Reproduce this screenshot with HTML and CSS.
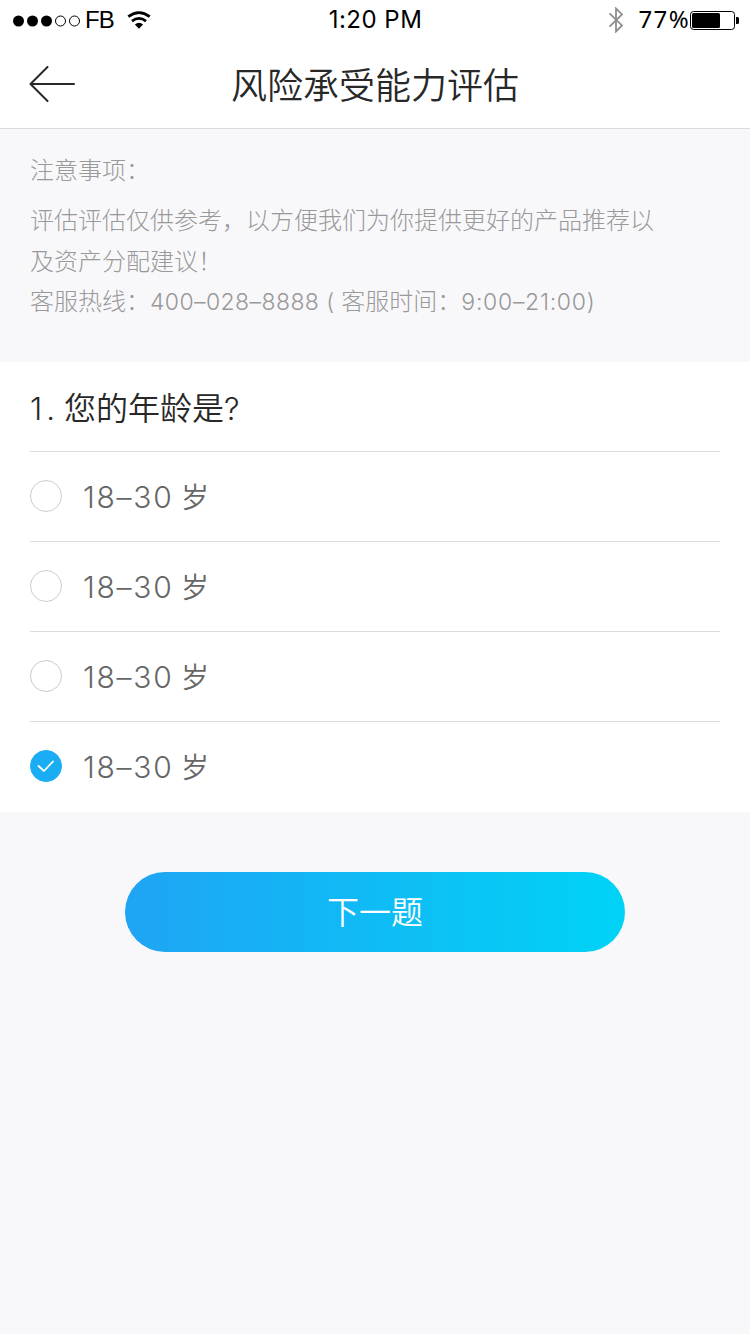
FILE: index.html
```html
<!DOCTYPE html>
<html lang="zh-CN">
<head>
    <meta charset="UTF-8">
    <meta name="viewport" content="width=device-width, initial-scale=1.0">
    <title>风险承受能力评估</title>
    <link rel="stylesheet" href="styles.css">
</head>
<body>

<!-- Status bar -->
<div class="status-bar">
    <div class="status-left">
        <svg class="signal" width="68" height="12" viewBox="0 0 68 12">
            <circle cx="5.5" cy="6" r="5.5"/>
            <circle cx="19.5" cy="6" r="5.5"/>
            <circle cx="33.5" cy="6" r="5.5"/>
            <circle class="empty" cx="47.5" cy="6" r="5"/>
            <circle class="empty" cx="61.5" cy="6" r="5"/>
        </svg>
        <span class="carrier">FB</span>
        <svg class="wifi" width="24" height="18" viewBox="0 0 24 18">
            <path class="wave" d="M1.3 5.6Q12 -2.4 22.7 5.6"/>
            <path class="wave" d="M5 10.1Q12 4.6 19 10.1"/>
            <path d="M7.9 13.4Q12 10.2 16.1 13.4L12 17.8Z"/>
        </svg>
    </div>
    <span class="time">1:20 PM</span>
    <div class="status-right">
        <svg class="bluetooth" width="16" height="26" viewBox="0 0 16 26">
            <path d="M1.5 6.3L14 18.4L8 24.5V1.5L14 7.4L1.5 19.7"/>
        </svg>
        <span class="percent">77%</span>
        <svg class="battery" width="49" height="19" viewBox="0 0 49 19">
            <rect class="case" x="0.5" y="0.5" width="44" height="18" rx="3"/>
            <rect x="2" y="2" width="28" height="15" rx="1.5"/>
            <path d="M46 6h1.5q1.5 0 1.5 1.5v4q0 1.5-1.5 1.5H46z"/>
        </svg>
    </div>
</div>

<header class="header">
    <a class="back" href="#">
        <svg width="46" height="36" viewBox="0 0 46 36">
            <path d="M18.5 1L1.5 18L18.5 35M1.5 18H45"/>
        </svg>
    </a>
    <h1>风险承受能力评估</h1>
</header>

<section class="notice">
    <h3>注意事项：</h3>
    <p>评估评估仅供参考，以方便我们为你提供更好的产品推荐以<br>及资产分配建议！</p>
    <p class="hotline">客服热线：<span class="phone">400–028–8888 (</span> 客服时间：<span class="hours">9:00–21:00)</span></p>
</section>

<form class="question">
    <h2><span class="number">1.</span>您的年龄是<span class="mark">?</span></h2>
    <label class="option">
        <input type="radio" name="age">
        <span class="radio"></span>
        <span class="range">18–30</span><span class="unit">岁</span>
    </label>
    <label class="option">
        <input type="radio" name="age">
        <span class="radio"></span>
        <span class="range">18–30</span><span class="unit">岁</span>
    </label>
    <label class="option">
        <input type="radio" name="age">
        <span class="radio"></span>
        <span class="range">18–30</span><span class="unit">岁</span>
    </label>
    <label class="option">
        <input type="radio" name="age" checked>
        <span class="radio">
            <svg width="18" height="14" viewBox="0 0 18 14"><path d="M1.5 7L7 12L16 2.5"/></svg>
        </span>
        <span class="range">18–30</span><span class="unit">岁</span>
    </label>
</form>

<button class="next" type="button">下一题</button>

</body>
</html>
```
FILE: styles.css
```css
* { box-sizing: border-box; }
body { margin: 0; background: #f8f8fb; color: #282828; font-family: Inter, "Noto Sans CJK SC", sans-serif; }
h1, h2, h3, p { margin: 0; font-weight: 300; }

/* Status bar */
.status-bar { display: grid; grid-template-columns: 1fr auto 1fr; align-items: center; height: 40px; background: #fff; color: #000; font-size: 24px; line-height: 40px; }
.status-left { display: flex; align-items: center; padding-left: 13px; }
.status-right { display: flex; align-items: center; justify-content: flex-end; padding-right: 11px; }
.signal { margin-top: 1px; }
.signal .empty { fill: none; stroke: #000; stroke-width: 1; }
.carrier { margin-left: 4px; font-family: "Liberation Sans", sans-serif; letter-spacing: -1px; }
.wifi { margin-left: 13px; }
.wifi .wave { fill: none; stroke: #000; stroke-width: 2.8; }
.time { padding-left: 1px; letter-spacing: 0.5px; }
.bluetooth { margin-right: 14px; fill: none; stroke: #8e8e8e; stroke-width: 1.8; }
.percent { padding-bottom: 2px; font-family: "Noto Sans", sans-serif; letter-spacing: 1.4px; line-height: 38px; }
.battery .case { fill: none; stroke: #000; }

/* Title */
.header { display: grid; grid-template-columns: 100px 1fr 100px; align-items: center; height: 89px; background: #fff; border-bottom: 1px solid #dcdcdc; }
.header h1 { font-family: "Noto Sans CJK SC", sans-serif; font-size: 36px; font-weight: 350; line-height: 86px; height: 88px; text-align: center; }
.back { display: flex; padding-left: 29px; }
.back path { fill: none; stroke: #282828; stroke-width: 2; stroke-linecap: round; stroke-linejoin: round; }

/* Notes */
.notice { height: 233px; padding: 21px 30px 0; color: #999; font-size: 24px; line-height: 41px; white-space: nowrap; }
.notice h3 { margin-bottom: 9px; font-size: 24px; }
.hotline { margin-top: -1px; }
.phone, .hours { font-size: 23px; letter-spacing: 0.4px; }
.hours { letter-spacing: 0.7px; }

/* Question */
.question { height: 450px; padding: 0 30px; background: #fff; }
.question h2 { height: 89px; font-size: 32px; line-height: 89px; font-family: "Noto Sans CJK SC", sans-serif; font-weight: 350; }
.number, .mark { font-family: Inter, sans-serif; font-size: 31px; font-weight: 300; }
.number { display: inline-block; width: 34px; letter-spacing: 4px; }
.option { display: flex; align-items: center; height: 90px; border-top: 1px solid #dcdcdc; color: #666; font-size: 28px; font-weight: 300; }
.option input { display: none; }
.radio { display: flex; align-items: center; justify-content: center; width: 32px; height: 32px; margin: 0 21px 2px 0; border: 1px solid #ccc; border-radius: 50%; }
.option input:checked + .radio { background: #1badf4; border-color: #1badf4; }
.radio path { fill: none; stroke: #fff; stroke-width: 1.8; stroke-linecap: round; stroke-linejoin: round; }
.range { width: 98px; font-size: 30px; letter-spacing: 1.7px; }
.unit { padding-bottom: 1px; font-weight: 350; }

.next { display: block; width: 500px; height: 80px; margin: 60px auto 0; padding: 0 0 3px; border: none; border-radius: 40px; background: linear-gradient(to right, #1fa4f4, #00d3f6); color: #fff; font-family: "Noto Sans CJK SC", sans-serif; font-size: 32px; font-weight: 350; line-height: 77px; cursor: pointer; }
```
